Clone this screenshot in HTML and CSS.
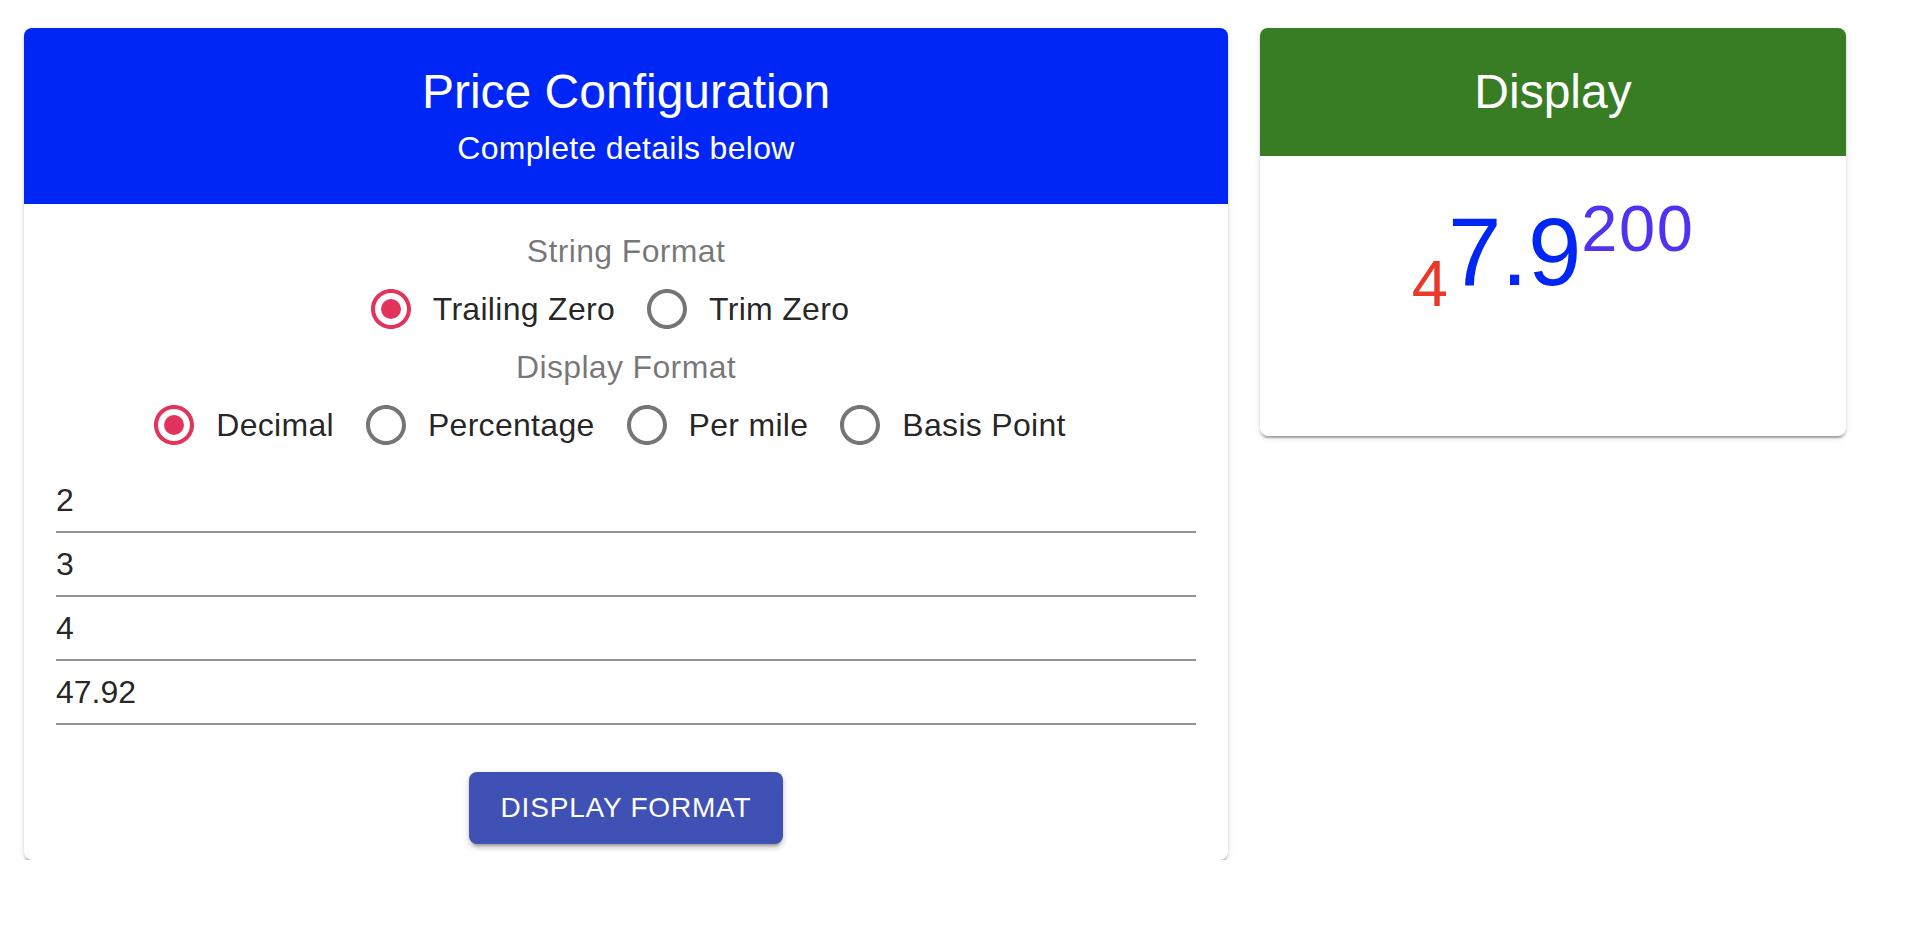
FILE: index.html
```html
<!DOCTYPE html>
<html lang="en">
<head>
<meta charset="utf-8">
<title>Price Configuration</title>
<link rel="stylesheet" href="styles.css">
</head>
<body>
<div class="page">
  <section class="card card-config">
    <header class="card-header header-blue">
      <h1 class="card-title">Price Configuration</h1>
      <p class="card-subtitle">Complete details below</p>
    </header>
    <div class="card-content">
      <div class="form-label">String Format</div>
      <div class="radio-row">
        <label class="radio-item checked">
          <span class="radio-box"><svg viewBox="0 0 24 24" width="48" height="48"><path class="ring" d="M12 2C6.48 2 2 6.48 2 12s4.48 10 10 10 10-4.48 10-10S17.52 2 12 2zm0 18c-4.42 0-8-3.58-8-8s3.58-8 8-8 8 3.58 8 8-3.58 8-8 8z"/><circle class="dot" cx="12" cy="12" r="5"/></svg></span>
          <span class="radio-text">Trailing Zero</span>
        </label>
        <label class="radio-item">
          <span class="radio-box"><svg viewBox="0 0 24 24" width="48" height="48"><path class="ring" d="M12 2C6.48 2 2 6.48 2 12s4.48 10 10 10 10-4.48 10-10S17.52 2 12 2zm0 18c-4.42 0-8-3.58-8-8s3.58-8 8-8 8 3.58 8 8-3.58 8-8 8z"/></svg></span>
          <span class="radio-text">Trim Zero</span>
        </label>
      </div>
      <div class="form-label">Display Format</div>
      <div class="radio-row">
        <label class="radio-item checked">
          <span class="radio-box"><svg viewBox="0 0 24 24" width="48" height="48"><path class="ring" d="M12 2C6.48 2 2 6.48 2 12s4.48 10 10 10 10-4.48 10-10S17.52 2 12 2zm0 18c-4.42 0-8-3.58-8-8s3.58-8 8-8 8 3.58 8 8-3.58 8-8 8z"/><circle class="dot" cx="12" cy="12" r="5"/></svg></span>
          <span class="radio-text">Decimal</span>
        </label>
        <label class="radio-item">
          <span class="radio-box"><svg viewBox="0 0 24 24" width="48" height="48"><path class="ring" d="M12 2C6.48 2 2 6.48 2 12s4.48 10 10 10 10-4.48 10-10S17.52 2 12 2zm0 18c-4.42 0-8-3.58-8-8s3.58-8 8-8 8 3.58 8 8-3.58 8-8 8z"/></svg></span>
          <span class="radio-text">Percentage</span>
        </label>
        <label class="radio-item">
          <span class="radio-box"><svg viewBox="0 0 24 24" width="48" height="48"><path class="ring" d="M12 2C6.48 2 2 6.48 2 12s4.48 10 10 10 10-4.48 10-10S17.52 2 12 2zm0 18c-4.42 0-8-3.58-8-8s3.58-8 8-8 8 3.58 8 8-3.58 8-8 8z"/></svg></span>
          <span class="radio-text">Per mile</span>
        </label>
        <label class="radio-item">
          <span class="radio-box"><svg viewBox="0 0 24 24" width="48" height="48"><path class="ring" d="M12 2C6.48 2 2 6.48 2 12s4.48 10 10 10 10-4.48 10-10S17.52 2 12 2zm0 18c-4.42 0-8-3.58-8-8s3.58-8 8-8 8 3.58 8 8-3.58 8-8 8z"/></svg></span>
          <span class="radio-text">Basis Point</span>
        </label>
      </div>
      <div class="inputs">
        <input class="text-input" type="text" value="2">
        <input class="text-input" type="text" value="3">
        <input class="text-input" type="text" value="4">
        <input class="text-input" type="text" value="47.92">
      </div>
    </div>
    <div class="card-actions">
      <button class="btn-primary" type="button">Display Format</button>
    </div>
  </section>

  <section class="card card-display">
    <header class="card-header header-green">
      <h1 class="card-title">Display</h1>
    </header>
    <div class="display-content">
      <div class="price"><span class="price-lead">4</span><span class="price-main">7.9</span><span class="price-tail">200</span></div>
    </div>
  </section>
</div>
</body>
</html>
```

FILE: styles.css
```css
* { box-sizing: border-box; }

html, body {
  margin: 0;
  padding: 0;
  background: #ffffff;
}

body {
  font-family: "Liberation Sans", Arial, Helvetica, sans-serif;
  color: rgba(0, 0, 0, 0.87);
}

.page {
  display: flex;
  align-items: flex-start;
  gap: 32px;
  padding: 28px 0 0 24px;
}

.card {
  background: #fff;
  border-radius: 8px;
  overflow: hidden;
  box-shadow: 0 4px 2px -2px rgba(0,0,0,0.2), 0 2px 2px 0 rgba(0,0,0,0.14), 0 2px 6px 0 rgba(0,0,0,0.12);
}

.card-config { width: 1204px; }
.card-display { width: 586px; }

.card-header {
  padding: 32px 16px;
  text-align: center;
  color: #fff;
}

.header-blue { background: #0026f5; }
.header-green { background: #387d23; }

.card-title {
  margin: 0;
  font-size: 48px;
  font-weight: 400;
  line-height: 64px;
}

.card-subtitle {
  margin: 0;
  font-size: 32px;
  line-height: 48px;
  letter-spacing: 0.3px;
}

.card-content {
  padding: 27px 32px 32px;
  display: flex;
  flex-direction: column;
  align-items: center;
}

.form-label {
  font-size: 32px;
  line-height: 40px;
  letter-spacing: 0.35px;
  color: rgba(0, 0, 0, 0.54);
}

.radio-row {
  display: flex;
  justify-content: center;
  align-items: center;
  height: 76px;
}

.radio-item {
  display: flex;
  align-items: center;
  margin-left: -22px;
  margin-right: 32px;
  cursor: pointer;
}

.radio-box {
  display: flex;
  padding: 18px;
}

.radio-box svg { display: block; }

.ring { fill: rgba(0, 0, 0, 0.54); }
.dot { fill: #e2335c; }
.checked .ring { fill: #e2335c; }

.radio-text {
  font-size: 32px;
  line-height: 48px;
  letter-spacing: 0.3px;
  color: rgba(0, 0, 0, 0.87);
}

.inputs {
  align-self: stretch;
  display: flex;
  flex-direction: column;
  margin-top: 6px;
}

.text-input {
  display: block;
  width: 100%;
  height: 64px;
  padding: 12px 0 12px;
  border: none;
  border-bottom: 2px solid #949494;
  border-radius: 0;
  outline: none;
  background: transparent;
  font-family: inherit;
  font-size: 32px;
  line-height: 38px;
  color: rgba(0, 0, 0, 0.87);
}

.card-actions {
  display: flex;
  justify-content: center;
  padding: 15px 16px 16px;
}

.btn-primary {
  height: 72px;
  padding: 0 32px;
  border: none;
  border-radius: 8px;
  background: #3f51b5;
  color: #fff;
  font-family: inherit;
  font-size: 28px;
  font-weight: 400;
  letter-spacing: 0.8px;
  text-transform: uppercase;
  box-shadow: 0 6px 2px -4px rgba(0,0,0,0.2), 0 4px 4px 0 rgba(0,0,0,0.14), 0 2px 10px 0 rgba(0,0,0,0.12);
  cursor: pointer;
}

.display-content {
  height: 280px;
  padding-top: 40px;
  text-align: center;
}

.price {
  line-height: 1;
  white-space: nowrap;
}

.price-main {
  font-size: 96px;
  color: #0026f5;
}

.price-lead {
  font-size: 65px;
  color: #e8392a;
  vertical-align: -21px;
}

.price-tail {
  font-size: 65px;
  letter-spacing: 1.5px;
  color: #4f33f0;
  vertical-align: 34px;
}
```
